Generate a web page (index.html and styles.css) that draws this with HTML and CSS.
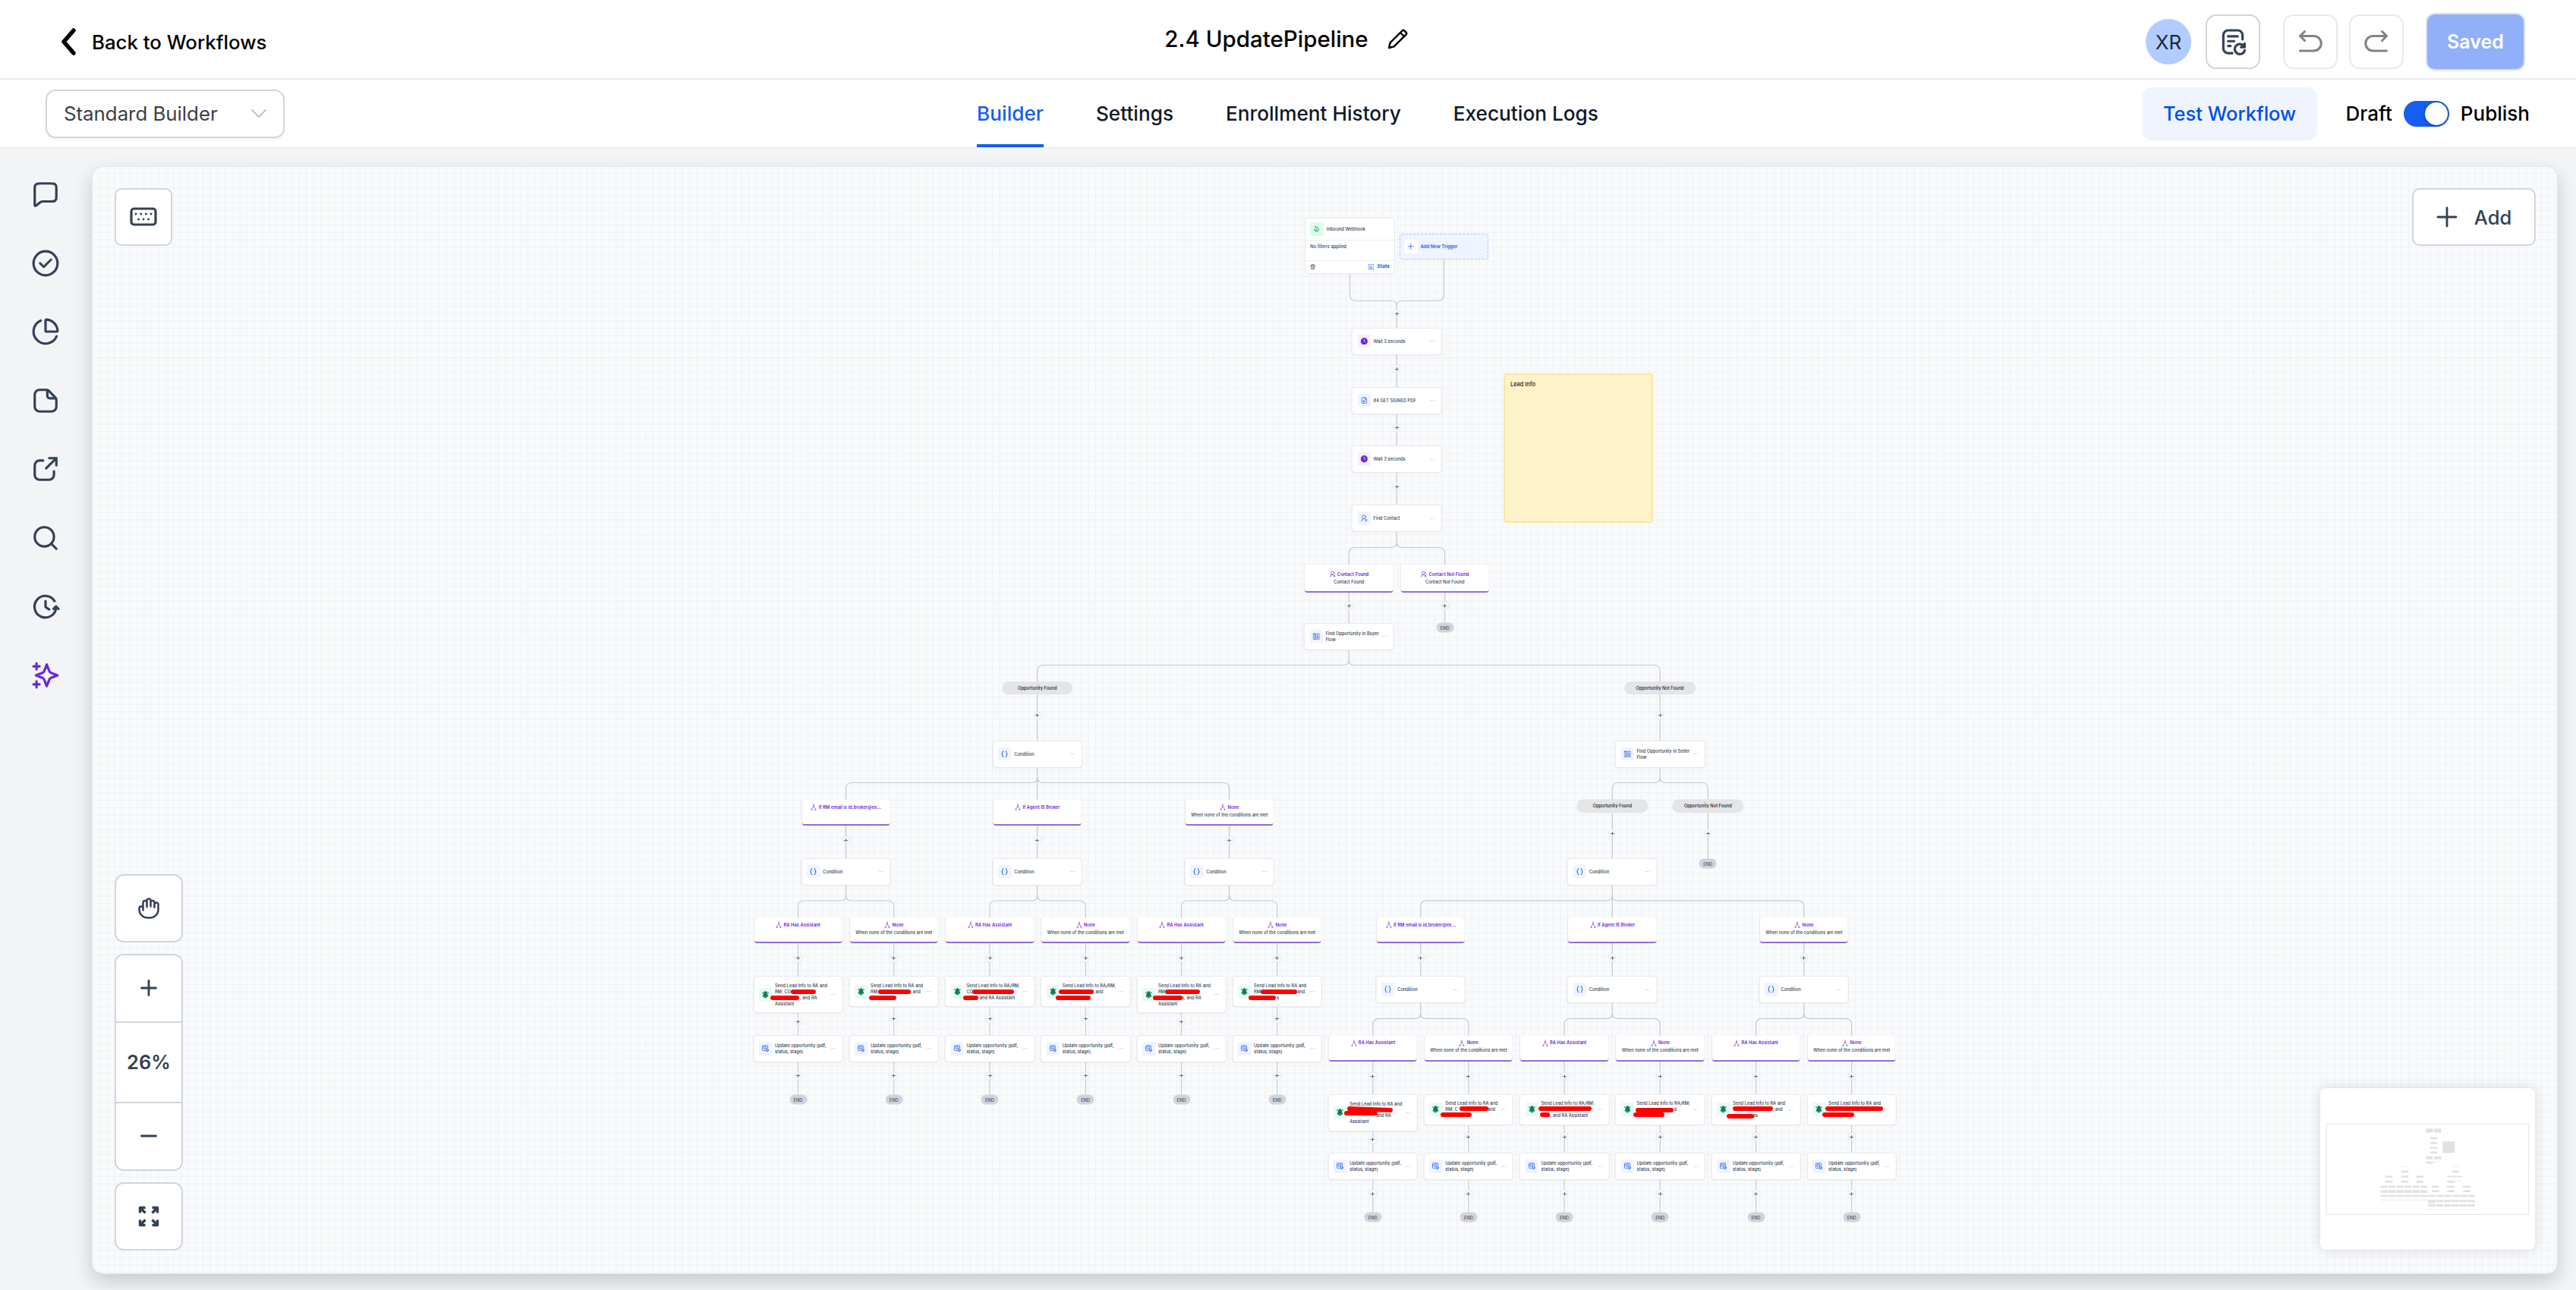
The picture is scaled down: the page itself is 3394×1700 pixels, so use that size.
FILE: index.html
```html
<!DOCTYPE html>
<html lang="en">
<head>
<meta charset="utf-8">
<title>2.4 UpdatePipeline</title>
<link rel="stylesheet" href="styles.css">
</head>
<body>
<header class="topbar">
  <a class="back"><svg width="20" height="36" viewBox="0 0 20 36"><path d="M17 3 4 18l13 15"/></svg><span>Back to Workflows</span></a>
  <div class="title"><span>2.4 UpdatePipeline</span>
    <svg width="30" height="30" viewBox="0 0 30 30"><path d="M3 27l1.600-6.600L20.400 4.600a2.200 2.200 0 0 1 3.100 0l2 2a2.200 2.200 0 0 1 0 3.100L9.600 25.400zM18 7l5 5"/></svg>
  </div>
  <div class="actions">
    <div class="avatar">XR</div>
    <button class="sq log"><svg width="38" height="38" viewBox="0 0 24 24"><path d="M20 10V6.500A4 4 0 0 0 16 2.500H8a4 4 0 0 0-4 4v11a4 4 0 0 0 4 4h3.500M8 7.500h8M8 11.500h5M8 15.500h2"/><path d="M21.700 13.500v3h-3M21.500 16.300a4.200 4.200 0 1 0 .3 2.900"/></svg></button>
    <button class="sq faded undo"><svg width="36" height="36" viewBox="0 0 24 24"><path d="M7 3 3 7l4 4M3 7h12a6 6 0 0 1 0 13H3"/></svg></button>
    <button class="sq faded redo"><svg width="36" height="36" viewBox="0 0 24 24"><path d="m17 3 4 4-4 4M21 7H9a6 6 0 0 0 0 13h12"/></svg></button>
    <button class="saved"><span>Saved</span></button>
  </div>
</header>
<nav class="tabbar">
  <div class="select"><span>Standard Builder</span><svg width="20" height="12" viewBox="0 0 20 12"><path d="m1 1 9 9 9-9"/></svg></div>
  <div class="tabs"><a class="tab active">Builder</a><a class="tab">Settings</a><a class="tab">Enrollment History</a><a class="tab">Execution Logs</a></div>
  <div class="publish">
    <button class="test"><span>Test Workflow</span></button>
    <span>Draft</span><span class="toggle"><i></i></span><span>Publish</span>
  </div>
</nav>
<main class="workspace">
  <aside class="rail">
    <svg viewBox="0 0 24 24"><path d="M3 7.800c0-1.680 0-2.520.33-3.160a3 3 0 0 1 1.300-1.300C5.280 3 6.120 3 7.800 3h8.400c1.680 0 2.520 0 3.160.33a3 3 0 0 1 1.310 1.300C21 5.280 21 6.120 21 7.800v5.400c0 1.680 0 2.520-.33 3.160a3 3 0 0 1-1.300 1.310C18.720 18 17.880 18 16.200 18H9.700c-.8 0-1.400.2-2 .6l-3.600 2.900c-.6.4-1.100.1-1.100-.6z"/></svg>
    <svg viewBox="0 0 24 24"><circle cx="12" cy="12" r="10"/><path d="m7.500 12 3 3 6-6"/></svg>
    <svg viewBox="0 0 24 24"><path d="M21.200 15.900A10 10 0 1 1 8 2.800"/><path d="M12 3v8.200c0 .5.300.8.8.8H21a1 1 0 0 0 1-1A10 10 0 0 0 13 2a1 1 0 0 0-1 1z"/></svg>
    <svg viewBox="0 0 24 24"><path d="M13 3H7a4 4 0 0 0-4 4v10a4 4 0 0 0 4 4h10a4 4 0 0 0 4-4v-5.500c0-1-.3-1.600-1-2.300L14.800 3.900C14.300 3.300 13.800 3 13 3z"/><path d="M13.500 3.200V8a2 2 0 0 0 2 2h5"/></svg>
    <svg viewBox="0 0 24 24"><path d="M21 9V3h-6M21 3l-8.500 8.500M10 5H7a4 4 0 0 0-4 4v8a4 4 0 0 0 4 4h8a4 4 0 0 0 4-4v-3"/></svg>
    <svg viewBox="0 0 24 24"><circle cx="11" cy="11" r="8"/><path d="m21 21-4.300-4.300"/></svg>
    <svg viewBox="0 0 24 24"><path d="m22.700 13.500-2-2-2 2M20.800 12.500A9 9 0 1 1 19.500 7M12 7v5l3 2"/></svg>
    <svg class="ai" viewBox="0 0 24 24"><path d="M4.500 22v-5M4.500 7V2M2 4.500h5M2 19.500h5M13 3l-1.730 4.500c-.28.730-.42 1.100-.64 1.410a3 3 0 0 1-.71.71c-.31.220-.68.360-1.410.640L4 12l4.500 1.730c.730.280 1.100.420 1.410.640.270.200.510.440.710.710.220.310.360.680.640 1.410L13 21l1.730-4.500c.280-.730.420-1.100.640-1.410.200-.270.440-.510.710-.710.310-.220.680-.360 1.410-.640L22 12l-4.500-1.730c-.730-.280-1.100-.420-1.410-.640a3 3 0 0 1-.710-.710c-.220-.310-.360-.680-.640-1.410z"/></svg>
  </aside>
  <section class="canvas">
    <div class="board" id="board"></div>
    <button class="tool keys"><svg width="36" height="26" viewBox="0 0 36 26"><rect x="2" y="2" width="32" height="21" rx="3.500"/><path class="dots" d="M8 9h.1M14.700 9h.1M21.300 9h.1M28 9h.1M11.500 16h.1M18 16h.1M24.500 16h.1"/></svg></button>
    <button class="tool add"><svg width="28" height="28" viewBox="0 0 28 28"><path d="M14 2v24M2 14h24"/></svg><span>Add</span></button>
    <div class="zoombar">
      <button class="tool"><svg width="30" height="30" viewBox="0 0 24 24"><path d="M18 11V6a2 2 0 0 0-4 0M14 10V4a2 2 0 0 0-4 0v2M10 10.500V6a2 2 0 0 0-4 0v8M18 8a2 2 0 1 1 4 0v6a9 8.500 0 0 1-9 8h-2a9 8.500 0 0 1-9-8v-2a2 2 0 0 1 4 0"/></svg></button>
      <div class="group">
        <button><svg width="24" height="24" viewBox="0 0 24 24"><path d="M12 2.500v19M2.500 12h19"/></svg></button>
        <span class="pct">26%</span>
        <button><svg width="24" height="24" viewBox="0 0 24 24"><path d="M2.500 12h19"/></svg></button>
      </div>
      <button class="tool"><svg class="expand" width="28" height="28" viewBox="0 0 28 28"><path d="M2.500 9.500v-7h7M2.500 2.500l7 7M25.500 9.500v-7h-7M25.500 2.500l-7 7M2.500 18.500v7h7M2.500 25.500l7-7M25.500 18.500v7h-7M25.500 25.500l-7-7"/></svg></button>
    </div>
    <div class="minimap" id="minimap"></div>
  </section>
</main>
<script src="app.js"></script>
</body>
</html>
```
FILE: styles.css
```css
*{box-sizing:border-box}
body{margin:0;width:3394px;height:1700px;overflow:hidden;display:flex;flex-direction:column;background:#f2f4f7;font-family:Inter,"Liberation Sans",sans-serif;font-size:26px;font-weight:500;color:#000}
button{font:inherit;color:inherit;margin:0;padding:0;background:#fff;border:0;display:flex;align-items:center;justify-content:center}
svg{fill:none;stroke:currentColor;stroke-width:2;stroke-linecap:round;stroke-linejoin:round;flex:none;display:block}
.topbar,.tabbar{display:grid;grid-template-columns:1fr auto 1fr;align-items:center;background:#fff;flex:none}
.topbar{height:105px;border-bottom:2px solid #eaebee;padding:7px 69px 0 80px}
.back{display:flex;align-items:center;gap:21px;font-size:25.800px}
.back svg{stroke-width:5.500}
.title{display:flex;align-items:center;gap:24px;font-size:29.500px;padding-right:14px;margin-top:-8px}
.title svg{stroke-width:2.400}
.actions{display:flex;justify-content:flex-end;align-items:center}
.avatar{width:60px;height:60px;border-radius:50%;background:#b2ccff;display:flex;align-items:center;justify-content:center;color:#1d2939;font-weight:400;margin-right:1px}
.sq{width:72px;height:72px;border:2px solid #d0d5dd;border-radius:14px;color:#344054}
.log{margin-left:18px}
.undo{margin-left:30px}.redo{margin-left:15px}
.faded{border-color:#e7e9ed;color:#838383}
.saved{margin-left:31px;width:127px;height:72px;border-radius:10px;background:#92affa;color:#fff;box-shadow:0 0 0 2px #d6e1fd;font-weight:600;font-size:25px}
.tabbar{height:89px;padding:0 61px 0 60px}
.select{width:315px;height:64px;border:2px solid #d0d5dd;border-radius:13px;box-shadow:0 2px 3px #1018280d;display:flex;align-items:center;justify-content:space-between;padding:0 22px;color:#3c3f45;font-weight:400;font-size:25.800px}
.select svg{color:#c2c2c2}
.tabs{display:flex;gap:69px;align-self:stretch}
.tab{display:flex;align-items:center;color:#101828;border-bottom:4px solid transparent;border-top:4px solid transparent;font-size:26.200px}
.tab.active{color:#155eef;border-bottom-color:#155eef}
.publish{display:flex;justify-content:flex-end;align-items:center;gap:15px}
.test{width:230px;height:70px;border-radius:12px;background:#eff4ff;color:#004eeb;margin-right:23px;font-size:25.500px}
.toggle{width:60px;height:34px;border-radius:17px;background:#155eef;padding:2px;display:flex;justify-content:flex-end}
.toggle i{width:30px;height:30px;border-radius:50%;background:#fff;box-shadow:0 1px 4px #0006}
.workspace{flex:1;display:flex;background:#f2f4f6;padding:25px 25px 22.500px 0;border-top:1px solid #e9ebee}
.rail{width:122px;padding:17px 0 0 41px;display:flex;flex-direction:column;gap:52.600px;color:#344054}
.rail svg{width:38px;height:38px}
.rail .ai{color:#6927da}
.canvas{flex:1;position:relative;overflow:visible;border-radius:14px;background-color:#f9fafb;background-image:linear-gradient(90deg,#f0f1f4 1.200px,transparent 1.200px),linear-gradient(#f0f1f4 1.200px,transparent 1.200px);background-size:9.720px 9.720px;background-position:9px 8px;box-shadow:0 0 0 1px #e7e8eb,0 10px 26px #10182833}
.tool{border:2px solid #d0d5dd;border-radius:12px;color:#344054}
.keys{position:absolute;left:29px;top:28px;width:76px;height:76px;border-radius:9px}
.keys svg{stroke-width:3.200}.keys .dots{stroke-width:2.800}
.add{position:absolute;right:28px;top:28px;width:163px;height:76px;border-radius:10px;gap:22px;font-size:25.500px}
.add svg,.group svg{stroke-width:2.800}
.zoombar{position:absolute;left:29px;bottom:30px;display:flex;flex-direction:column;gap:15px;width:90px;color:#344054}
.zoombar .tool{height:90px}
.group{height:286px;display:flex;flex-direction:column;border:2px solid #d0d5dd;border-radius:12px;overflow:hidden;background:#fff}
.group button{flex:1}
.pct{height:108px;border:solid #d0d5dd;border-width:2px 0;display:flex;align-items:center;justify-content:center;font-size:25.500px;font-weight:600}
.expand{stroke-width:3.400;stroke-linecap:butt}
.minimap{position:absolute;right:29px;bottom:31px;width:283px;height:213px;background:#fff;border-radius:8px;box-shadow:0 0 16px #10182822}
.minimap svg{width:283px;height:213px;stroke:none}

/* workflow board: free canvas, children carry their own coordinates */
.board{position:absolute;left:-122px;top:-220px;width:3394px;height:1700px;font-size:5.740px;line-height:7.800px;color:#344054;white-space:nowrap}
.board>*{position:absolute}
.wires{left:0;top:0;stroke:#c6c9cf;stroke-width:1.200}
.node,.branch{width:116.600px;height:34px;background:#fff;border-radius:4px;transform:translateX(-50%)}
.node{display:flex;align-items:center;padding:0 9px 0 6.500px;gap:3.700px;box-shadow:0 0 0 1px #e6e8ec,0 1px 2px #1018281f}
.box{width:17.500px;height:17.500px;border-radius:2.500px;background:#eff4ff;color:#2f62e8;display:flex;align-items:center;justify-content:center;flex:none}
.box svg{width:9.500px;height:9.500px}
.box.wait{background:#f4f0ff;color:#6927da}.box.send{background:#e9fbf2;color:#087f5b}.box.hook{background:#dffaec;color:#129e68}
.more{margin-left:auto;color:#98a2b3}
.more svg{width:6px;height:3px;stroke-width:.9}
.txt{flex:none;width:70px}
.txt div{height:7.800px}
.lead{display:inline-block}
.branch{border-bottom:2px solid #936be0;text-align:center;padding-top:5px;box-shadow:0 0 1px #1018281a}
.branch.tall{height:37px;padding-top:8px}
.branch b{color:#6927da;font-weight:600;font-size:5.850px;display:flex;align-items:center;justify-content:center;gap:2px;height:9px;margin-bottom:1.800px}
.branch b svg{width:8.500px;height:11px;stroke-width:1.900}
.pill{transform:translate(-50%,-50%);height:17.500px;border-radius:9px;background:#e4e5e8;width:93.500px;text-align:center;line-height:17.500px;color:#101828}
.end{transform:translate(-50%,-50%);height:13px;width:23px;border-radius:7px;background:#d0d3da;text-align:center;line-height:13px;color:#475467}
.plus{transform:translate(-50%,-50%);width:11px;height:11px;border-radius:50%;background:#f9fafb;border:1px solid #e6e8ec;color:#667085;display:flex;align-items:center;justify-content:center}
.plus svg{width:6px;height:6px;stroke-width:4.200}
.red{background:#f00;border-radius:3px;height:6px}
.trigger{left:1720.300px;top:288px;width:116.600px;height:72px;background:#fff;border-radius:4px;box-shadow:0 0 0 1px #e9ebee,0 1px 2px #1018281f}
.trigger>div{display:flex;align-items:center;padding:0 6px}
.trigger .t-head{height:29px;gap:4px;border-bottom:1px solid #eceef1;font-size:5.900px}
.trigger .t-body{height:27px;padding-bottom:10px;border-bottom:1px solid #eceef1;font-size:5.850px}
.t-foot{height:16px;gap:4px;color:#155eef;font-weight:700;font-size:6.500px}
.t-foot svg{width:7.500px;height:7.500px}
.t-foot svg:first-child{color:#344054;margin-right:auto}
.newtrig{left:1844px;top:308px;width:116.500px;height:34px;border:1px dashed #a9c3fb;border-radius:3px;background:#eff4ff;display:flex;align-items:center;padding-left:5px;gap:4px;color:#155eef;font-weight:600;font-size:6px}
.newtrig .box{background:#fff}
.note{left:1981px;top:492px;width:197px;height:197px;border:2px solid #fbe7a2;border-radius:4px;background:#fdf2c8;padding:9px 7px;font-size:7.400px;color:#101828}
```
FILE: app.js
```js
const S = (d, vb = '0 0 24 24') => `<svg viewBox="${vb}">${d}</svg>`;
const ICON = {
  hook: S('<path d="M6 4c8 0 13 5 13 12M6 10c5 0 7 3 7 7M4 16h5v4h8" stroke-width="2.500"/>'),
  wait: S('<circle cx="12" cy="12" r="11" fill="currentColor"/><path d="M12 6v6l3 3" stroke="#fff"/>'),
  file: S('<path d="M14 2H6a2 2 0 0 0-2 2v16a2 2 0 0 0 2 2h12a2 2 0 0 0 2-2V8zM14 2v6h6M9 12v6l6-3z"/>'),
  contact: S('<circle cx="11" cy="8" r="6"/><path d="M3 22c0-5 3-8 8-8M15 15l6 7M21 16l-5 5" stroke-width="2.400"/>'),
  opp: S('<rect x="1" y="3" width="22" height="18" rx="1.500"/><path d="M6 3v18M10 8h8v8h-8zM14 12l5 5"/>'),
  cond: S('<path d="M8 2C4 2 6 10 3 12c3 2 1 10 5 10M16 2c4 0 2 8 5 10-3 2-1 10-5 10" stroke-width="2.600"/>'),
  send: S('<path d="M12 2c-4 0-6 3-6 7 0 5-2 6-3 9h18c-1-3-3-4-3-9 0-4-2-7-6-7zM9 20h6v2H9z" fill="currentColor"/><path d="M2 7l2-4M22 7l-2-4"/>'),
  update: S('<path d="M10 19H4a2 2 0 0 1-2-2V4a2 2 0 0 1 2-2h14a2 2 0 0 1 2 2v6M7 6h8v7H7z"/><circle cx="17.500" cy="17.500" r="4.500"/><path d="m15.500 18 2 1.500 3-4"/>'),
  split: S('<path d="M12 1v7M12 8c0 6-7 5-7 14M12 8c0 6 7 5 7 14M3 22h4M17 22h4"/>'),
  plus: S('<path d="M12 3v18M3 12h18"/>'),
  dots: S('<path d="M.5 1.500h.1M3 1.500h.1M5.500 1.500h.1"/>', '0 0 6 3'),
  trash: S('<path d="M2 6h20M8 6V2h8v4M5 6l1 16h12l1-16M10 11v6M14 11v6"/>'),
  stats: S('<path d="M2 2v20h20V2zM8 17v-6M12 17V7M16 17v-3"/>')
};
let html = '', wires = '';
const at = (x, y) => `style="left:${x}px;top:${y}px"`;
const wire = (x, a, b) => { wires += `M${x} ${a}V${b}`; };
const tee = (cx, a, h, xs, b) => xs.forEach(x => {
  if (x === cx) return wire(x, a, b);
  const s = x < cx ? -1 : 1;
  wires += `M${cx} ${a}V${h - 7}Q${cx} ${h} ${cx + 7 * s} ${h}H${x - 8 * s}Q${x} ${h} ${x} ${h + 8}V${b}`;
});
const line = l => Array.isArray(l)
  ? `<div><span class="lead" style="width:${l[1]}px">${l[0]}</span><span>${l[2]}</span></div>`
  : `<div>${l}</div>`;
const node = (x, y, icon, lines, h = 34) => {
  html += `<div class="node" style="left:${x}px;top:${y}px;height:${h}px"><span class="box ${icon}">${ICON[icon]}</span><div class="txt">${lines.map(line).join('')}</div><span class="more">${ICON.dots}</span></div>`;
};
const branch = (x, y, title, sub = '', icon = 'split') => {
  html += `<div class="branch${icon === 'contact' ? ' tall' : ''}" ${at(x, y)}><b>${ICON[icon]}<span>${title}</span></b><span>${sub}</span></div>`;
};
const plus = (x, y) => { html += `<div class="plus" ${at(x, y)}>${ICON.plus}</div>`; };
const end = (x, y) => { html += `<div class="end" ${at(x, y)}>END</div>`; };
const pill = (x, y, t) => { html += `<div class="pill" ${at(x, y)}>${t}</div>`; };
const red = (x1, x2, y, rot = 0) => {
  html += `<div class="red" style="left:${x1}px;top:${y}px;width:${x2 - x1}px;${rot ? `transform:rotate(${rot}deg)` : ''}"></div>`;
};

// Triggers and the opening chain
html += `<div class="trigger"><div class="t-head"><span class="box hook">${ICON.hook}</span><span>Inbound Webhook</span></div><div class="t-body"><span>No filters applied</span></div><div class="t-foot">${ICON.trash}${ICON.stats}<span>Stats</span></div></div>`;
html += `<div class="newtrig"><span class="box">${ICON.plus}</span><span>Add New Trigger</span></div>`;
html += '<div class="note">Lead Info</div>';
wires += 'M1778.500 360V388Q1778.500 396.500 1787 396.500H1833Q1840 396.500 1840 403M1902.500 342V388Q1902.500 396.500 1894 396.500H1847Q1840 396.500 1840 403V670';
[413, 486, 563.5, 641].forEach(y => plus(1840, y));
node(1840.2, 432.5, 'wait', ['Wait 3 seconds']);
node(1840.2, 510.5, 'file', ['#4 GET SIGNED PDF']);
node(1840.2, 588, 'wait', ['Wait 3 seconds']);
node(1840.2, 666, 'contact', ['Find Contact']);
tee(1840, 699, 721.5, [1777.3, 1903.7], 744);
branch(1777.3, 744, 'Contact Found', 'Contact Found', 'contact');
branch(1903.7, 744, 'Contact Not Found', 'Contact Not Found', 'contact');
wire(1777.3, 780, 822); wire(1903.7, 780, 822);
plus(1777.3, 798); plus(1903.7, 798);
end(1903.7, 827);
node(1777.3, 821.5, 'opp', ['Find Opportunity in Buyer', 'Flow']);
tee(1777.3, 855, 876.5, [1366.8, 2187], 898);

// Both sides of the opportunity lookup
wire(1366.8, 915, 977); pill(1366.8, 906.5, 'Opportunity Found'); plus(1366.8, 942.7);
node(1366.8, 976.5, 'cond', ['Condition']);
wire(2187, 915, 977); pill(2187, 906.5, 'Opportunity Not Found'); plus(2187, 942.7);
node(2187, 976.5, 'opp', ['Find Opportunity in Seller', 'Flow']);
tee(2187, 1010, 1031.5, [2124.3, 2250.3], 1054);
pill(2124.3, 1062, 'Opportunity Found'); pill(2250.3, 1062, 'Opportunity Not Found');
wire(2124.3, 1070, 1132); wire(2250.3, 1070, 1132);
plus(2124.3, 1098); plus(2250.3, 1098);
end(2250.3, 1137.5);
node(2124.3, 1131.5, 'cond', ['Condition']);

const NONE = 'When none of the conditions are met';
const conditions = (cx, xs, y, leaves) => {
  tee(cx, y - 44, y - 22.5, xs, y);
  branch(xs[0], y, 'If RM email is id.broker@ex...');
  branch(xs[1], y, 'If Agent IS Broker');
  branch(xs[2], y, 'None', NONE);
  xs.forEach((x, i) => {
    wire(x, y + 34, y + 78);
    plus(x, y + 53);
    node(x, y + 77.7, 'cond', ['Condition']);
    tee(x, y + 111, y + 133, [leaves[2 * i], leaves[2 * i + 1]], y + 156);
  });
};
const L = [1051.5, 1177.7, 1304, 1430.3, 1556.5, 1682.7];
const R = [1808.8, 1934.9, 2061, 2187.2, 2313.5, 2439.7];
conditions(1366.8, [1114.6, 1366.8, 1619.8], 1054, L);
conditions(2124.3, [1871.8, 2124.3, 2376.8], 1209.3, R);

const AND = 'Send Lead Info to RA and', RM = 'Send Lead Info to RA/RM;';
const leaf = (x, y, i, lines) => {
  const tall = lines.length > 3;
  wire(x, y + 34, y + 240);
  branch(x, y, i % 2 ? 'None' : 'RA Has Assistant', i % 2 ? NONE : '');
  plus(x, y + 53.3);
  node(x, y + 78, 'send', lines, tall ? 47 : 39);
  plus(x, y + (tall ? 137 : 133.5));
  node(x, y + 155.5, 'update', ['Update opportunity (pdf,', 'status, stage)']);
  plus(x, y + 208.3);
  end(x, y + 239.3);
};
[
  [AND, 'RM; CO', ['', 33, ', and RA'], 'Assistant'],
  [AND, ['RM;', 55.5, 'and'], ''],
  [RM, 'CO', ['', 17.3, 'and RA Assistant']],
  [RM, ['', 43.5, 'and'], ''],
  [AND, 'RM', ['', 31, 's, and RA'], 'Assistant'],
  [AND, ['RM', 57, 'and'], ['', 30, 's']]
].forEach((t, i) => leaf(L[i], 1209.3, i, t));
[
  [AND, '', ['', 35, 'and RA'], 'Assistant'],
  [AND, ['RM; C', 55.5, 'and'], ''],
  [RM, '', ['', 9, 's, and RA Assistant']],
  [RM, ['', 49, 'd'], ''],
  [AND, ['', 55.5, 'and'], ['', 27, 'ss']],
  [AND, '', '']
].forEach((t, i) => leaf(R[i], 1364.7, i, t));

// Redaction strokes over recipient names: [left, right, top, rotation]
[[1041.6, 1075, 1304], [1014.8, 1053.5, 1312.2], [1157, 1199.5, 1304], [1145, 1181, 1312.2],
 [1281.4, 1336, 1304], [1269, 1289, 1312.2], [1394.8, 1441, 1304], [1390.8, 1437, 1312.2],
 [1535, 1581, 1304], [1519, 1557.5, 1312.2], [1661, 1709, 1304], [1645, 1681.3, 1312.2],
 [1775, 1835, 1459.2, 2], [1771, 1815, 1464], [1923, 1961, 1458], [1897.5, 1939, 1466],
 [2027, 2096.5, 1458], [2029, 2042, 1466], [2155, 2205, 1460], [2151.6, 2193, 1466],
 [2282.8, 2336.3, 1458], [2275, 2311, 1468], [2405.2, 2481, 1458], [2401, 2443, 1466]
].forEach(r => red(...r));

document.getElementById('board').innerHTML =
  `<svg class="wires" width="3394" height="1700"><path d="${wires}"/></svg>` + html;

// Minimap: [x, y, width, height] of each block
const blocks = [[528, 261, 28, 16], [560, 261, 28, 16], [594, 312, 48, 45], [528, 371, 27, 11], [560, 371, 28, 11], [528, 391, 28, 8], [556, 391, 32, 2], [431, 411, 27, 2], [630, 411, 28, 2], [612, 448, 60, 5], [641, 467, 30, 2], [349, 543, 186, 2], [537, 543, 28, 12], [537, 580, 184, 2]];
[295, 314, 333, 351].forEach(y => blocks.push([545, y, 28, 8]));
[[430, 427], [630, 427], [367, 447], [430, 447], [489, 447], [367, 467], [430, 467], [489, 467], [612, 467], [551, 487], [612, 487], [675, 487], [551, 504], [612, 504], [675, 504]].forEach(p => blocks.push([...p, 29, 8]));
for (let i = 0; i < 6; i++) {
  [[487, 8], [504, 11], [523, 8]].forEach(([y, h]) => blocks.push([349 + 31.2 * i, y, 28.5, h]));
  [[523, 8], [543, 8], [560, 9]].forEach(([y, h]) => blocks.push([536.5 + 31.2 * i, y, 28.5, h]));
}
document.getElementById('minimap').innerHTML = `<svg viewBox="110 101 849 639"><rect x="136" y="242" width="798" height="358" fill="none" stroke="#e4e4e4" stroke-width="3"/>${blocks.map(b => `<rect x="${b[0]}" y="${b[1]}" width="${b[2]}" height="${b[3]}" fill="#e1e1e1"/>`).join('')}</svg>`;
```
